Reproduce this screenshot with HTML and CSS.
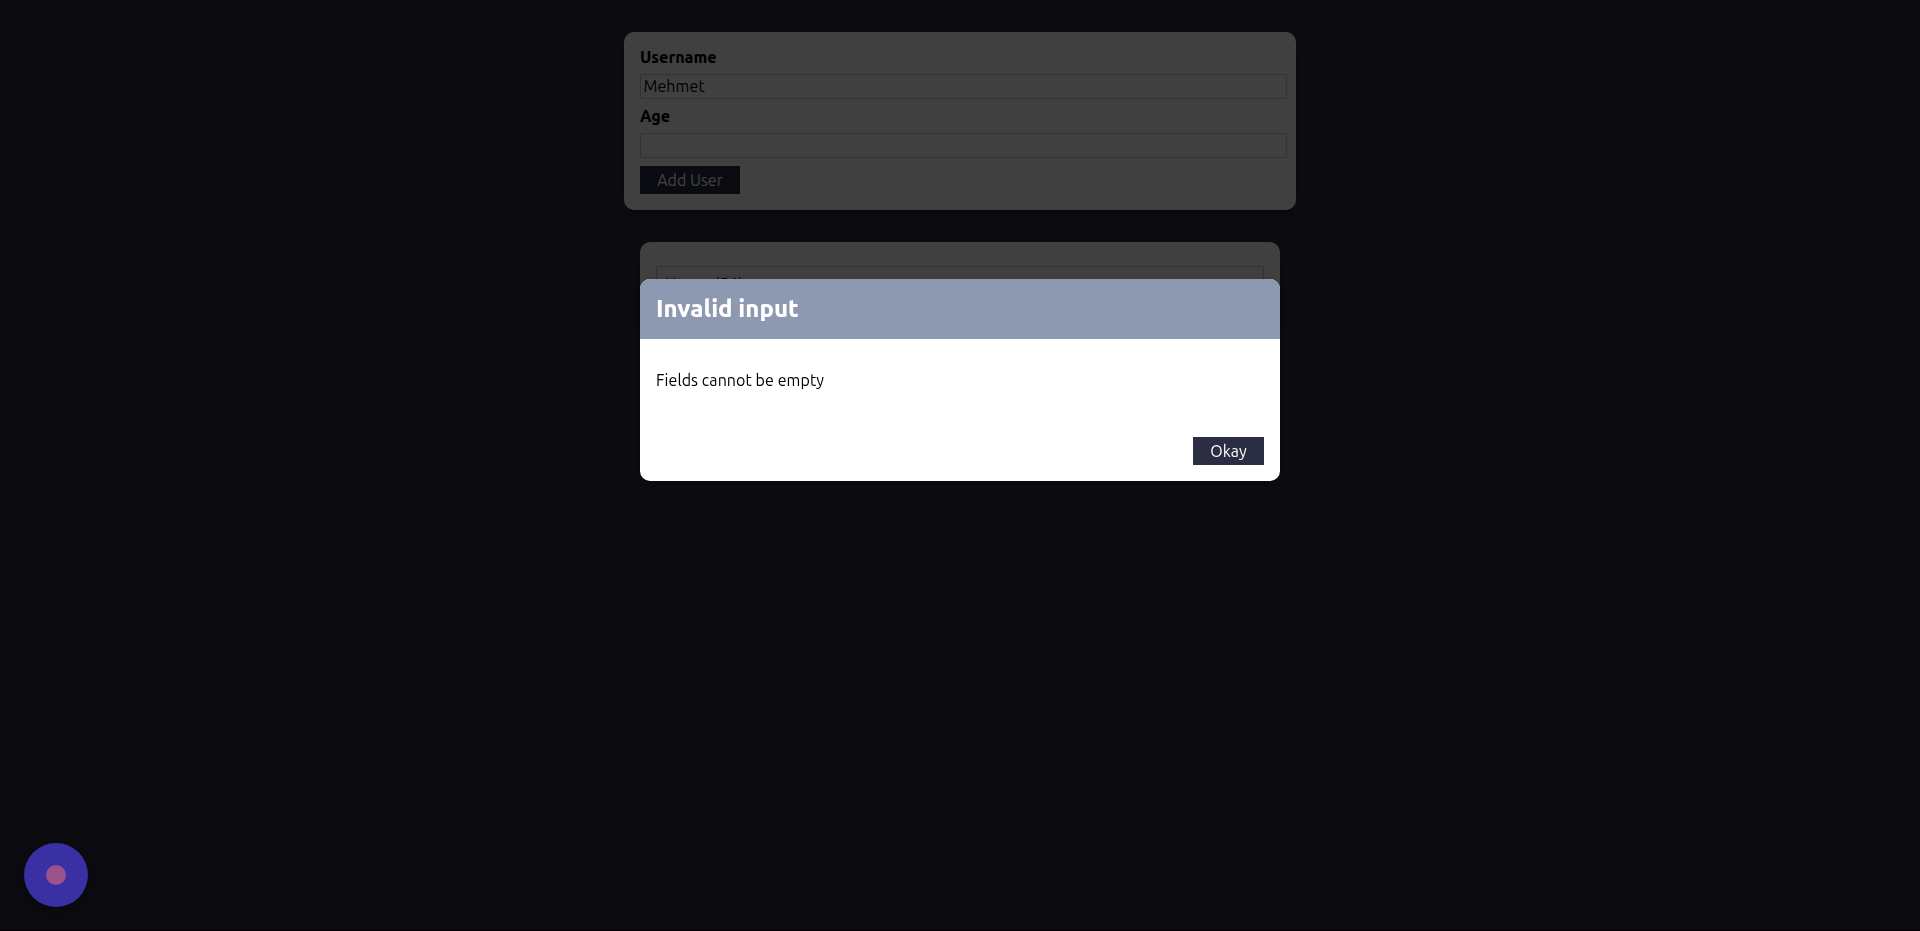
FILE: index.html
```html
<!DOCTYPE html>
<html lang="en">
<head>
<meta charset="utf-8">
<title>Users</title>
<link rel="stylesheet" href="styles.css">
</head>
<body>
<form class="card user-form">
  <label class="label" for="username">Username</label>
  <input class="input" id="username" type="text" value="Mehmet">
  <label class="label" for="age">Age</label>
  <input class="input" id="age" type="text">
  <button class="button add" type="button">Add User</button>
</form>
<div class="card users">
  <ul class="list"><li class="item">Hasan (54)</li></ul>
</div>
<div class="backdrop"></div>
<section class="modal">
  <header class="modal-header"><h2 class="title">Invalid input</h2></header>
  <div class="modal-content"><p class="message">Fields cannot be empty</p></div>
  <footer class="modal-actions"><button class="button okay" type="button">Okay</button></footer>
</section>
<div class="recorder"><span class="dot"></span></div>
</body>
</html>
```
FILE: styles.css
```css
* { box-sizing: border-box; }
html { background: #2d2d42; font-family: Ubuntu, "Noto Sans", sans-serif; font-size: 16px; }
body { margin: 0; height: 931px; overflow: hidden; border-bottom: 1px solid #180018; }
.card { background: #fff; border-radius: 10px; box-shadow: 0 2px 8px rgba(0,0,0,.26); }
.user-form { width: 672px; height: 178px; margin: 32px auto; padding: 16px; }
.label { display: block; height: 18px; line-height: 18px; margin-bottom: 8px; font-weight: 800; }
.input { display: block; width: 647px; height: 25px; margin: 0 0 8px; padding: 0 2.4px 2px; border: 1px solid #ccc; background: #fff; color: #000; font: inherit; letter-spacing: .1px; outline: none; }
.button { display: block; height: 28px; padding: 0; border: 0; background: #2b2d42; color: #fff; font: inherit; }
.add { width: 100px; }
.users { width: 640px; height: 90px; margin: 0 auto; padding: 24px 16px; }
.list { list-style: none; margin: 0; padding: 0; }
.item { border: 1px solid #ccc; height: 36px; padding: 8px; line-height: 18px; letter-spacing: .3px; }
.backdrop { position: fixed; inset: 0; background: rgba(0,0,0,.75); z-index: 10; }
.modal { position: fixed; top: 279px; left: calc(50% - 320px); width: 640px; height: 202px; border-radius: 10px; overflow: hidden; background: #fff; z-index: 20; box-shadow: 0 2px 8px rgba(0,0,0,.26); }
.modal-header { height: 60px; padding: 16px; background: #8d99b0; }
.title { margin: 0; color: #fff; font-size: 24px; line-height: 27px; font-weight: 800; }
.modal-content { padding: 32px 16px; }
.message { margin: 0; line-height: 18px; letter-spacing: .08px; }
.modal-actions { display: flex; justify-content: flex-end; padding: 16px; }
.okay { width: 71px; }
.recorder { position: fixed; left: 24px; bottom: 24px; width: 64px; height: 64px; display: flex; align-items: center; justify-content: center; border-radius: 50%; background: #3930a3; z-index: 30; box-shadow: 0 4px 12px rgba(0,0,0,.3); }
.dot { width: 20px; height: 20px; border-radius: 50%; background: #9b538c; }
```
